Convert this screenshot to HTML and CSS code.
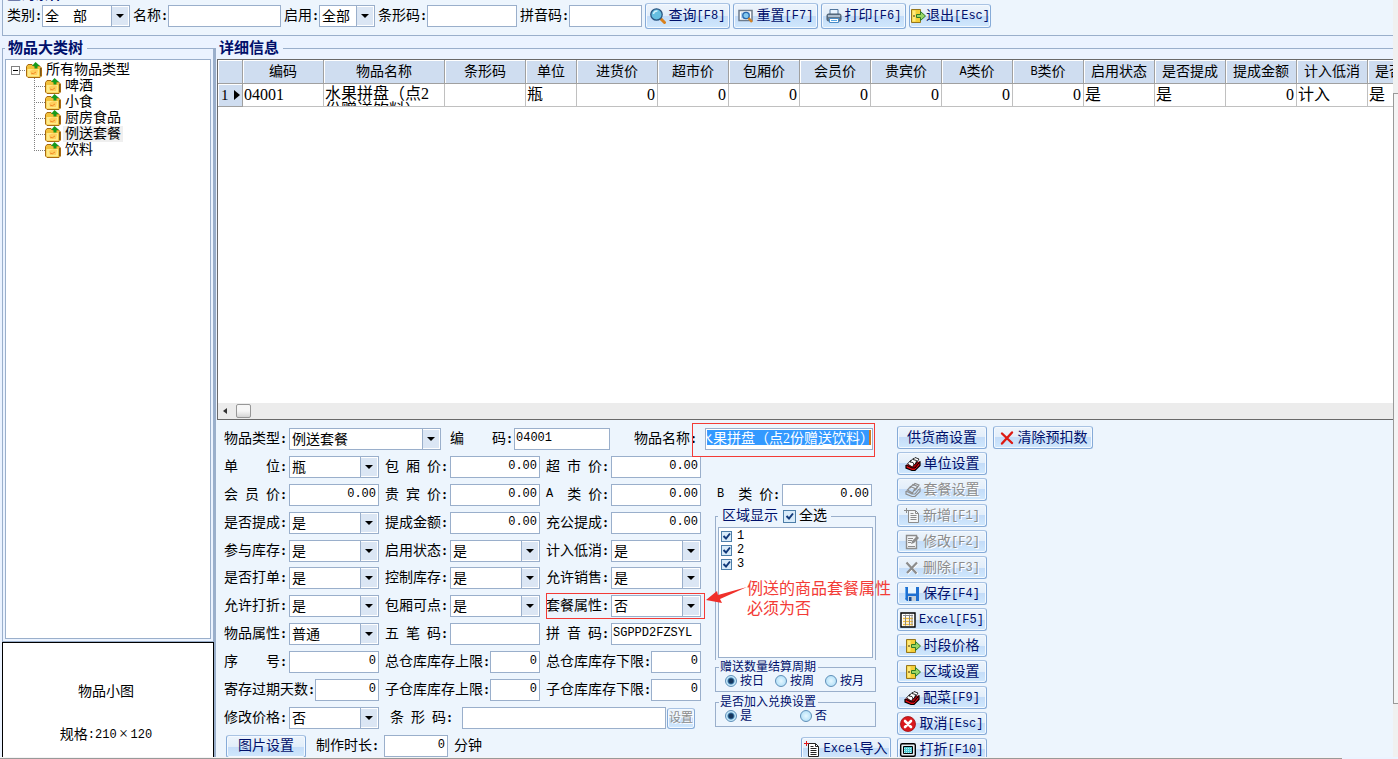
FILE: index.html
```html
<!DOCTYPE html>
<html lang="zh-CN">
<head>
<meta charset="utf-8">
<title>物品管理</title>
<link rel="stylesheet" href="styles.css">
</head>
<body>
<svg class="defs" aria-hidden="true">
  <symbol id="folder" viewBox="0 0 16 16"><path d="M.5 4.500 2 2.500h4l1.500 1.500h6l2 2v8L14 15.500H2L.5 14z" fill="#f2c13b" stroke="#a86a10"/><path d="M1.500 7H13v7.500H1.500z" fill="#ffea8a"/><path d="M4 9q4-3 8-1l-1 5H5z" fill="#ffcf5d"/><path d="M5 11q2 2 5-1" fill="none" stroke="#f08a2a"/><path d="M14.500 6v8" stroke="#7a5a1c"/><path d="M9.500 0 14 4h-2.500v2.500H8.500V4H6z" fill="#179a1c"/></symbol>
  <symbol id="find" viewBox="0 0 16 16"><path d="m10 10 4.500 4.500" stroke="#d9811c" stroke-width="3" stroke-linecap="round"/><circle cx="6.500" cy="6.500" r="5.700" fill="#66bfe0" stroke="#2a5580" stroke-width="1.300"/><path d="M3.500 6a3.500 3.500 0 0 1 4-3" stroke="#d5f2fc" stroke-width="1.500" fill="none"/></symbol>
  <symbol id="preview" viewBox="0 0 16 16"><path d="M1 2.500h13v10H1z" fill="#fff" stroke="#6c7b8c" stroke-width="1.500"/><path d="M3 4.500h9v6H3z" fill="#b5d4ef"/><circle cx="8" cy="7.500" r="3.200" fill="#83c8ee" stroke="#2767ae" stroke-width="1.300"/><path d="m10.500 10 3.500 4" stroke="#d28224" stroke-width="2.500"/></symbol>
  <symbol id="print" viewBox="0 0 16 16"><path d="M4 1.500h8v5H4z" fill="#eaf4ff" stroke="#52769c"/><rect x="1" y="6" width="14" height="7" rx="1.500" fill="#66788a" stroke="#45586c"/><path d="M2 8h12" stroke="#c8d6e4" stroke-width="1.500"/><path d="M3.500 10.500h9v4h-9z" fill="#fff" stroke="#4b8bc5"/><path d="M5 12.500h6" stroke="#56a7e5"/></symbol>
  <symbol id="exit" viewBox="0 0 16 16"><path d="M1.500 1.500h9v13h-9z" fill="#f4cf37" stroke="#96761c"/><path d="M2.500 2.500h3v11h-3z" fill="#ffe97d"/><path d="M4 7v2" stroke="#3c2d06"/><path d="M6.500 6.500h4v-3L15.500 8l-5 4.500v-3h-4z" fill="#97d665" stroke="#2e7a25"/></symbol>
  <symbol id="cards" viewBox="0 0 16 16"><path d="M1 9v3l6 2.500h3l5-5V5.500" fill="#e60b12" stroke="#000" stroke-width="1.200"/><path d="m1 9 6 3h3l5-6.500" fill="#a40008" stroke="#000"/><path d="m2.500 8 3-3.500 4.500 2-2.500 4.500z" fill="#fff" stroke="#000" stroke-width=".8"/><path d="m5 6 3-3.500 4.500 2-3 4.500L8 6.500z" fill="#fff" stroke="#000" stroke-width=".8"/><path d="m8 3.500 2-2 4 1.500-3 4.500.5-3z" fill="#fff" stroke="#000" stroke-width=".8"/></symbol>
  <symbol id="cards-off" viewBox="0 0 16 16"><path d="M1 9v3l6 2.500h3l5-5V5.500M2.500 8l3-3.500 4.500 2-2.500 4.500zM5 6l3-3.500 4.500 2-3 4.500M8 3.500l2-2 4 1.500-3 4.500M1 9l6 3h3l4-5" fill="none" stroke="#8c8c8c" stroke-width="1.200"/></symbol>
  <symbol id="new-off" viewBox="0 0 16 16"><path d="M4.500 2.500h7l3 3v9h-10z" fill="#f4f6f8" stroke="#8c8c8c"/><path d="M11.500 2.500v3h3M6.500 5.500h3M6.500 7.500h6M6.500 9.500h6M6.500 11.500h6M0 2.500h5M2.500 0v5" fill="none" stroke="#8c8c8c"/></symbol>
  <symbol id="new" viewBox="0 0 16 16"><path d="M4.500 2.500h7l3 3v10h-10z" fill="#fff" stroke="#222"/><path d="M11.500 2.500v3h3M6.500 5.500h3M6.500 7.500h6M6.500 9.500h6M6.500 11.500h6M6.500 13.500h6" fill="none" stroke="#222"/><path d="M0 2.500h5M2.500 0v5" stroke="#e0151a"/></symbol>
  <symbol id="edit-off" viewBox="0 0 16 16"><path d="M2.500 1.500h10v13h-10z" fill="#f4f6f8" stroke="#8c8c8c" stroke-width="1.400"/><path d="M4 4.500h5M4 6.500h4M4 8.500h3M4 12.500h7" stroke="#8c8c8c"/><path d="m7 10 1-3 5-5 2 2-5 5z" fill="#8c8c8c"/></symbol>
  <symbol id="cross-off" viewBox="0 0 16 16"><path d="m3.500 3 10 11M13.500 3l-10 11" stroke="#fff" stroke-width="2"/><path d="m2.500 2.500 10 11M13 2.500l-10 10.500" stroke="#8c8c8c" stroke-width="2.200"/></symbol>
  <symbol id="cross" viewBox="0 0 16 16"><path d="M3 3.500 13 13M13 2.500 3 13.500" stroke="#dd1a12" stroke-width="2.400" stroke-linecap="round"/></symbol>
  <symbol id="save" viewBox="0 0 16 16"><path d="M1 1h14v14H3l-2-2z" fill="#1e6fd0"/><path d="M4 1h8v6.500H4z" fill="#e9f6ff"/><path d="M4 10h8v5H4z" fill="#c4cfda"/><path d="M5 11h2.500v4H5z" fill="#174b91"/><path d="M1.500 1.500v11" stroke="#5fa9f4"/></symbol>
  <symbol id="sheet" viewBox="0 0 16 16"><path d="M1 1h14v14H1z" fill="#fff" stroke="#000" stroke-width="1.400"/><path d="M3 3.500h10" stroke="#888"/><path d="M3 6.500h10M3 9.500h10M3 12.500h10" stroke="#f4bd32" stroke-width="1.600"/><path d="M5.500 2.500v11M9.500 2.500v11M12 2.500v11" stroke="#888"/></symbol>
  <symbol id="cancel" viewBox="0 0 16 16"><circle cx="8" cy="8" r="7.500" fill="#d9181c" stroke="#9e0d10" stroke-width=".8"/><path d="m5 5 6 6M11 5l-6 6" stroke="#fff" stroke-width="2.600" stroke-linecap="round"/></symbol>
  <symbol id="screen" viewBox="0 0 16 16"><rect x=".7" y="1.700" width="14.600" height="12.600" rx="1.500" fill="#e8eef2" stroke="#000" stroke-width="1.400"/><path d="M3.500 4.500h9v7h-9z" fill="#51cbd3" stroke="#000"/><path d="M4 6.500h8M4 8.500h8M4 10.500h8" stroke="#d5ffff" stroke-width=".8" stroke-dasharray="1 1"/></symbol>
</svg>

<div class="app">
  <div class="window">
    <fieldset class="toolbar">
      <legend>查询条件</legend>
      <label><span class="lb">类别<b>:</b></span><select class="w88"><option>全　部</option></select></label>
      <label><span class="lb">名称<b>:</b></span><input class="w113" type="text"></label>
      <label><span class="lb">启用<b>:</b></span><select class="w56"><option>全部</option></select></label>
      <label><span class="lb">条形码<b>:</b></span><input class="w90" type="text"></label>
      <label><span class="lb">拼音码<b>:</b></span><input class="w73" type="text"></label>
      <div class="tools">
        <button type="button"><svg><use href="#find"/></svg><span>查询<i>[F8]</i></span></button>
        <button type="button"><svg><use href="#preview"/></svg><span>重置<i>[F7]</i></span></button>
        <button type="button"><svg><use href="#print"/></svg><span>打印<i>[F6]</i></span></button>
        <button type="button" class="exit"><svg><use href="#exit"/></svg><span>退出<i>[Esc]</i></span></button>
      </div>
    </fieldset>

    <div class="body">
      <aside class="side">
        <fieldset class="panel tree-panel">
          <legend>物品大类树</legend>
          <div class="tree">
            <div class="root"><span class="toggle"></span><span class="dots"></span><svg><use href="#folder"/></svg><span class="name">所有物品类型</span></div>
            <ul>
              <li><svg><use href="#folder"/></svg><span class="name">啤酒</span></li>
              <li><svg><use href="#folder"/></svg><span class="name">小食</span></li>
              <li><svg><use href="#folder"/></svg><span class="name">厨房食品</span></li>
              <li><svg><use href="#folder"/></svg><span class="name current">例送套餐</span></li>
              <li><svg><use href="#folder"/></svg><span class="name">饮料</span></li>
            </ul>
          </div>
        </fieldset>
        <div class="picture"><p>物品小图</p><p>规格<i>:210</i><span class="times">×</span><i>120</i></p></div>
      </aside>

      <fieldset class="panel detail">
        <legend>详细信息</legend>
        <div class="gridbox">
          <div class="gridview">
            <table>
              <colgroup><col class="c25"><col class="c81"><col class="c121"><col class="c81"><col class="c51"><col class="c81"><col class="c71" span="11"></colgroup>
              <thead><tr><th></th><th>编码</th><th>物品名称</th><th>条形码</th><th>单位</th><th>进货价</th><th>超市价</th><th>包厢价</th><th>会员价</th><th>贵宾价</th><th><i>A</i>类价</th><th><i>B</i>类价</th><th>启用状态</th><th>是否提成</th><th>提成金额</th><th>计入低消</th><th>是否打单</th></tr></thead>
              <tbody><tr><th><div class="rowno">1<span></span></div></th><td>04001</td><td><div class="clip">水果拼盘（点2份赠送饮料）</div></td><td></td><td>瓶</td><td class="num">0</td><td class="num">0</td><td class="num">0</td><td class="num">0</td><td class="num">0</td><td class="num">0</td><td class="num">0</td><td>是</td><td>是</td><td class="num">0</td><td>计入</td><td>是</td></tr></tbody>
            </table>
          </div>
          <div class="hscroll"><span class="arrow"></span><span class="thumb"></span></div>
        </div>

        <form class="form">
          <div class="entry">
            <div class="row">
              <label class="cell type"><span class="lb">物品类型<b>:</b></span><select><option>例送套餐</option></select></label>
              <label class="cell code"><span class="lb">编&emsp;&emsp;码<b>:</b></span><input type="text" value="04001"></label>
              <label class="cell title"><span class="lb">物品名称<b>:</b></span><input type="text" class="picked" value="水果拼盘（点2份赠送饮料）"></label>
            </div>
            <div class="split">
              <div class="fields">
                <div class="rows">
                  <div class="row">
                    <label class="cell"><span class="lb">单&emsp;&emsp;位<b>:</b></span><select><option>瓶</option></select></label>
                    <label class="cell"><span class="lb">包&ensp;厢&ensp;价<b>:</b></span><input class="num" type="text" value="0.00"></label>
                    <label class="cell"><span class="lb">超&ensp;市&ensp;价<b>:</b></span><input class="num" type="text" value="0.00"></label>
                  </div>
                  <div class="row">
                    <label class="cell"><span class="lb">会&ensp;员&ensp;价<b>:</b></span><input class="num" type="text" value="0.00"></label>
                    <label class="cell"><span class="lb">贵&ensp;宾&ensp;价<b>:</b></span><input class="num" type="text" value="0.00"></label>
                    <label class="cell"><span class="lb"><i>A</i>&emsp;类&ensp;价<b>:</b></span><input class="num" type="text" value="0.00"></label>
                  </div>
                  <div class="row">
                    <label class="cell"><span class="lb">是否提成<b>:</b></span><select><option>是</option></select></label>
                    <label class="cell"><span class="lb">提成金额<b>:</b></span><input class="num" type="text" value="0.00"></label>
                    <label class="cell"><span class="lb">充公提成<b>:</b></span><input class="num" type="text" value="0.00"></label>
                  </div>
                  <div class="row">
                    <label class="cell"><span class="lb">参与库存<b>:</b></span><select><option>是</option></select></label>
                    <label class="cell"><span class="lb">启用状态<b>:</b></span><select><option>是</option></select></label>
                    <label class="cell"><span class="lb">计入低消<b>:</b></span><select><option>是</option></select></label>
                  </div>
                </div>
                <div class="rows">
                  <div class="row">
                    <label class="cell"><span class="lb">是否打单<b>:</b></span><select><option>是</option></select></label>
                    <label class="cell"><span class="lb">控制库存<b>:</b></span><select><option>是</option></select></label>
                    <label class="cell"><span class="lb">允许销售<b>:</b></span><select><option>是</option></select></label>
                  </div>
                  <div class="row">
                    <label class="cell"><span class="lb">允许打折<b>:</b></span><select><option>是</option></select></label>
                    <label class="cell"><span class="lb">包厢可点<b>:</b></span><select><option>是</option></select></label>
                    <label class="cell"><span class="lb">套餐属性<b>:</b></span><select><option>否</option></select></label>
                  </div>
                  <div class="row">
                    <label class="cell"><span class="lb">物品属性<b>:</b></span><select><option>普通</option></select></label>
                    <label class="cell"><span class="lb">五&ensp;笔&ensp;码<b>:</b></span><input type="text"></label>
                    <label class="cell"><span class="lb">拼&ensp;音&ensp;码<b>:</b></span><input type="text" value="SGPPD2FZSYL"></label>
                  </div>
                  <div class="row">
                    <label class="cell"><span class="lb">序&emsp;&emsp;号<b>:</b></span><input class="num" type="text" value="0"></label>
                    <label class="cell"><span class="lb">总仓库库存上限<b>:</b></span><input class="num" type="text" value="0"></label>
                    <label class="cell"><span class="lb">总仓库库存下限<b>:</b></span><input class="num" type="text" value="0"></label>
                  </div>
                  <div class="row">
                    <label class="cell"><span class="lb">寄存过期天数<b>:</b></span><input class="num" type="text" value="0"></label>
                    <label class="cell"><span class="lb">子仓库库存上限<b>:</b></span><input class="num" type="text" value="0"></label>
                    <label class="cell"><span class="lb">子仓库库存下限<b>:</b></span><input class="num" type="text" value="0"></label>
                  </div>
                  <div class="row">
                    <label class="cell"><span class="lb">修改价格<b>:</b></span><select><option>否</option></select></label>
                    <div class="barcode"><label class="cell"><span class="lb">条&ensp;形&ensp;码<b>:</b></span><input type="text"></label><button type="button" class="set" disabled>设置</button></div>
                  </div>
                  <div class="row last">
                    <button type="button" class="imgset">图片设置</button>
                    <label class="cell"><span class="lb">制作时长<b>:</b></span><input class="num" type="text" value="0"><span class="unit">分钟</span></label>
                  </div>
                </div>
              </div>

              <div class="options">
                <label class="cell"><span class="lb"><i>B</i>&emsp;类&ensp;价<b>:</b></span><input class="num" type="text" value="0.00"></label>
                <fieldset class="area">
                  <legend><span>区域显示</span><label class="all"><input type="checkbox" checked>全选</label></legend>
                  <div class="list">
                    <label><input type="checkbox" checked><i>1</i></label>
                    <label><input type="checkbox" checked><i>2</i></label>
                    <label><input type="checkbox" checked><i>3</i></label>
                  </div>
                </fieldset>
                <fieldset class="choice">
                  <legend>赠送数量结算周期</legend>
                  <div class="three"><label><input type="radio" name="cycle" checked>按日</label><label><input type="radio" name="cycle">按周</label><label><input type="radio" name="cycle">按月</label></div>
                </fieldset>
                <fieldset class="choice">
                  <legend>是否加入兑换设置</legend>
                  <div class="two"><label><input type="radio" name="swap" checked>是</label><label><input type="radio" name="swap">否</label></div>
                </fieldset>
                <button type="button" class="import"><svg><use href="#new"/></svg><span><i>Excel</i>导入</span></button>
              </div>
            </div>
            <div class="mark mark-name"></div>
            <div class="mark mark-suite"></div>
            <svg class="pointer" viewBox="0 0 42 18"><path d="M0 14 11 5l1 4L41 1 14 13l2 4z" fill="#f0302a"/></svg>
            <p class="note">例送的商品套餐属性<br>必须为否</p>
          </div>

          <div class="actions">
            <button type="button">供货商设置</button>
            <button type="button"><svg><use href="#cards"/></svg><span>单位设置</span></button>
            <button type="button" disabled><svg><use href="#cards-off"/></svg><span>套餐设置</span></button>
            <button type="button" disabled><svg><use href="#new-off"/></svg><span>新增<i>[F1]</i></span></button>
            <button type="button" disabled><svg><use href="#edit-off"/></svg><span>修改<i>[F2]</i></span></button>
            <button type="button" disabled><svg><use href="#cross-off"/></svg><span>删除<i>[F3]</i></span></button>
            <button type="button"><svg><use href="#save"/></svg><span>保存<i>[F4]</i></span></button>
            <button type="button"><svg><use href="#sheet"/></svg><span><i>Excel[F5]</i></span></button>
            <button type="button"><svg><use href="#exit"/></svg><span>时段价格</span></button>
            <button type="button"><svg><use href="#exit"/></svg><span>区域设置</span></button>
            <button type="button"><svg><use href="#cards"/></svg><span>配菜<i>[F9]</i></span></button>
            <button type="button"><svg><use href="#cancel"/></svg><span>取消<i>[Esc]</i></span></button>
            <button type="button"><svg><use href="#screen"/></svg><span>打折<i>[F10]</i></span></button>
          </div>
          <button type="button" class="clear"><svg><use href="#cross"/></svg><span>清除预扣数</span></button>
        </form>
      </fieldset>
    </div>
  </div>
  <div class="edge"><span></span></div>
  <div class="foot"></div>
</div>
</body>
</html>
```
FILE: styles.css
```css
:root {
  --line: #9aafcb;
  --navy: #00106b;
  --pane: #edf5fd;
}

* { box-sizing: border-box; }

body {
  margin: 0;
  height: 100vh;
  overflow: hidden;
  background: #ebf3ff;
  color: #000;
  font: 14px/16px "Liberation Serif", "Noto Sans CJK SC", serif;
}

p, ul, fieldset, legend { margin: 0; padding: 0; }
fieldset { min-width: 0; border: 1px solid var(--line); }
.defs { position: absolute; width: 0; height: 0; }
i { font: 12px/14px "Liberation Mono", monospace; vertical-align: 1px; }

.app {
  display: grid;
  grid-template: minmax(0, 1fr) 2px / minmax(0, 1fr) 5px;
  height: 100vh;
}
.window { display: flex; flex-direction: column; padding-left: 2px; min-height: 0; overflow: hidden; }
.edge { background: #f0f0f0; padding-top: 93px; }
.edge span { display: block; height: 611px; border: 1px solid #999; border-right: 0; background: #f4f4f4; }
.foot { grid-column: 1 / -1; margin-right: 56px; border-bottom: 1px solid #999; background: #f4f4f4; }

/* Controls */
input, select, button { margin: 0; font-family: inherit; font-size: 14px; color: #000; border-radius: 0; }
input[type=text], select { height: 22px; border: 1px solid var(--line); background-color: #fff; outline: 0; }
input[type=text] { padding: 0 2px 3px 1px; font: 12px/16px "Liberation Mono", monospace; }
input.num { text-align: right; }
select {
  appearance: none;
  padding: 0 18px 0 2px;
  background: #fff url("data:image/svg+xml,%3Csvg xmlns='http://www.w3.org/2000/svg' width='18' height='20'%3E%3Cpath d='M1 1h16v18H1z' fill='%23dbe6f4'/%3E%3Cpath d='M.5 0v20' stroke='%239aafcb'/%3E%3Cpath d='M5 8h8L9 12z'/%3E%3C/svg%3E") right center no-repeat;
}
button {
  display: flex;
  align-items: center;
  justify-content: center;
  gap: 3px;
  height: 23px;
  padding: 0;
  border: 1px solid #86abd8;
  border-top-color: #a9c3e3;
  border-radius: 3px;
  background: linear-gradient(#edf4fb, #e2eefa 50%, #c4dcf8 50%, #d0e8fd);
  box-shadow: inset 0 0 0 1px #f4f9ff;
  color: var(--navy);
  line-height: 16px;
  white-space: nowrap;
}
button:disabled { color: #8c8c8c; text-shadow: 1px 1px #fff; }
button svg, .tree svg { width: 16px; height: 16px; flex: none; }

.lb { display: flex; flex: none; white-space: nowrap; }
.lb b { width: 7px; text-align: center; }

/* Query bar: its caption runs off the top of the window */
.toolbar {
  display: flex;
  align-items: center;
  gap: 3px;
  height: 49px;
  margin-top: -13px;
  padding: 0 0 4px 4px;
  background: var(--pane);
  border-right: 0;
  flex: none;
}
.toolbar legend { line-height: 16px; font-weight: bold; color: var(--navy); }
.toolbar > label { display: flex; align-items: center; }
.tools { display: flex; align-items: center; gap: 3px; }
.tools button { width: 85px; height: 26px; }
.tools .exit { gap: 0; width: 82px; height: 24px; }
.w88 { width: 88px; }
.w113 { width: 113px; }
.w56 { width: 56px; }
.w90 { width: 90px; }
.w73 { width: 73px; }

/* Panels */
.body { display: flex; flex: 1; min-height: 0; padding-top: 5px; }
.side { display: flex; flex-direction: column; flex: none; width: 212px; }
.panel { display: flex; flex-direction: column; min-height: 0; }
.panel > legend { padding: 0 4px 0 3px; line-height: 14px; font-size: 15px; font-weight: bold; color: var(--navy); }
.tree-panel { flex: 1; padding: 4px 2px 2px; }
.tree { flex: 1; padding: 2px 0 0 5px; border: 1px solid var(--line); background: #fff; }
.root, .tree li { display: flex; align-items: center; height: 16px; }
.toggle {
  width: 9px;
  height: 9px;
  border: 1px solid #808080;
  background: linear-gradient(#000, #000) center / 5px 1px no-repeat;
}
.dots { width: 6px; height: 1px; background: repeating-linear-gradient(90deg, #808080 0 1px, transparent 1px 2px); }
.tree ul { padding-left: 23px; list-style: none; }
.tree li::before {
  content: "";
  width: 11px;
  height: 16px;
  background:
    repeating-linear-gradient(#808080 0 1px, transparent 1px 2px) left top / 1px 16px no-repeat,
    repeating-linear-gradient(90deg, #808080 0 1px, transparent 1px 2px) left 8px / 11px 1px no-repeat;
}
.tree li:last-child::before { background-size: 1px 8px, 11px 1px; }
.name { margin-left: 2px; padding: 0 2px; }
.name.current { background: #efefef; }
.picture {
  display: flex;
  flex-direction: column;
  align-items: center;
  justify-content: center;
  gap: 26px;
  height: 115px;
  padding: 26px 4px 0 0;
  border: 1px solid #000;
  border-bottom: 0;
  background: #fff;
}
.times { display: inline-block; width: 14px; text-align: center; font-size: 16px; }

/* Item grid */
.detail { flex: 1; border-left-width: 2px; border-right: 0; border-bottom: 0; }
.gridbox {
  display: flex;
  flex: 1;
  flex-direction: column;
  min-height: 0;
  margin: 4px 0 0 1px;
  border: 1px solid #696969;
  border-right: 0;
  background: #fff;
}
.gridview { flex: 1; min-height: 0; overflow: hidden; }
table { width: 1221px; table-layout: fixed; border-collapse: separate; border-spacing: 0; }
.c25 { width: 25px; }
.c51 { width: 51px; }
.c71 { width: 71px; }
.c81 { width: 81px; }
.c121 { width: 121px; }
th {
  height: 24px;
  padding: 0;
  border-right: 1px solid #a0a0a0;
  border-bottom: 1px solid #a0a0a0;
  background: #cfddf0;
  box-shadow: inset 1px 1px #fff;
  font-weight: normal;
}
td {
  height: 23px;
  padding: 0 2px 0 1px;
  border-right: 1px solid #c0c0c0;
  border-bottom: 1px solid #c0c0c0;
  font-size: 16px;
  line-height: 21px;
  vertical-align: top;
}
tbody th { height: 23px; }
td.num { text-align: right; }
.clip { height: 22px; padding-top: 2px; overflow: hidden; line-height: 16px; }
.rowno { display: flex; align-items: center; justify-content: space-between; padding: 0 2px 0 3px; font-size: 15px; }
.rowno span { border: 5px solid transparent; border-left: 6px solid #000; border-right: 0; }
.hscroll { display: flex; align-items: center; gap: 9px; height: 16px; padding-left: 5px; background: #ececec; }
.arrow { border: 3px solid transparent; border-right: 4px solid #333; border-left: 0; }
.thumb { width: 15px; height: 14px; border: 1px solid #979797; border-radius: 2px; background: linear-gradient(#f6f6f6 50%, #d4d4d4); }

/* Entry form */
.form { display: flex; flex: none; align-items: flex-start; gap: 6px; padding: 6px 0 0 8px; background: var(--pane); overflow: hidden; }
.entry { position: relative; width: 667px; padding-top: 2px; flex: none; }
.row, .cell { display: flex; align-items: center; }
.row { gap: 6px; height: 22px; }
.cell { width: 155px; flex: none; }
.cell .lb { min-width: 65px; }
.cell input, .cell select { flex: 1; min-width: 0; }
.cell.type { width: 217px; }
.cell.code { width: 160px; margin-left: 3px; }
.cell.code .lb { min-width: 64px; }
.cell.title { width: 239px; margin-left: 18px; }
.cell.title .lb { min-width: 71px; }
.cell .picked {
  padding: 0 3px 4px 1px;
  color: #fff;
  font: 14px/16px "Liberation Serif", "Noto Sans CJK SC", serif;
  text-indent: -8px;
  background: #fff linear-gradient(90deg, #3399ff calc(100% - 2px), #d07a20 0) 1px 1px / 164px 15px no-repeat;
}
.split { display: flex; gap: 13px; margin-top: 6px; }
.fields { display: flex; flex-direction: column; gap: 5px; width: 478px; }
.rows { display: flex; flex-direction: column; gap: 6px; }
.barcode { display: flex; align-items: center; gap: 1px; margin-left: 5px; }
.barcode .cell { width: 276px; }
.barcode .lb { min-width: 72px; }
.barcode .set { width: 28px; height: 21px; font-size: 12px; }
.row.last { gap: 10px; padding-left: 2px; }
.imgset { width: 80px; }
.last .cell { width: auto; }
.last .lb { min-width: 68px; }
.last .cell input { flex: none; width: 64px; }
.unit { margin-left: 6px; }

.options { width: 176px; margin-bottom: -4px; padding-top: 28px; }
.options .cell { margin-left: 2px; }
.options fieldset { width: 161px; }
.area { margin-top: 2px; padding: 3px 2px 2px; border-bottom: 0; }
.area legend { display: flex; gap: 5px; padding: 0 4px; color: var(--navy); }
.area label { display: flex; align-items: center; gap: 3px; color: #000; }
.area .list { height: 131px; padding: 1px 2px; border: 1px solid var(--line); background: #fff; }
.area .list label { height: 14px; gap: 5px; }
input[type=checkbox] {
  appearance: none;
  width: 11px;
  height: 11px;
  border: 1px solid #4d7ea8;
  background: #d9ecfa url("data:image/svg+xml,%3Csvg xmlns='http://www.w3.org/2000/svg' viewBox='0 0 9 9'%3E%3Cpath d='M1.500 4 4 6.500 8 1.500' fill='none' stroke='%23123a7a' stroke-width='2'/%3E%3C/svg%3E") center / 9px no-repeat;
}
.all input[type=checkbox] { width: 13px; height: 13px; }
.choice { padding: 0 0 3px 9px; color: var(--navy); }
.choice + .choice { margin-top: 3px; }
.choice legend { margin-left: -6px; padding: 0 2px 0 1px; font-size: 12px; line-height: 14px; }
.choice div { display: grid; line-height: 14px; }
.choice .three { grid-template-columns: repeat(3, 50px); }
.choice .two { grid-template-columns: 75px 75px; }
.choice label { display: flex; align-items: center; gap: 3px; font-size: 12px; }
input[type=radio] {
  appearance: none;
  width: 12px;
  height: 12px;
  border: 1px solid #5f8fb8;
  border-radius: 50%;
  background: radial-gradient(#e6f7ff, #a6daf5);
}
input[type=radio]:checked { background: radial-gradient(#16365c 0 2px, #3b78a8 3px, #c4e8fa 4px); }
.import { width: 90px; margin: 10px 0 0 86px; }

.actions { display: flex; flex: none; flex-direction: column; gap: 3px; width: 90px; margin-bottom: -4px; }
.clear { width: 100px; }

/* Callouts drawn over the form */
.mark { position: absolute; border: 1px solid #f33b36; }
.mark-name { left: 468px; top: -3px; width: 183px; height: 34px; }
.mark-suite { left: 322px; top: 167px; width: 159px; height: 26px; }
.pointer { position: absolute; left: 482px; top: 160px; width: 42px; height: 18px; }
.note { position: absolute; left: 523px; top: 153px; color: #f33b36; font-size: 16px; line-height: 20px; white-space: nowrap; }
```
